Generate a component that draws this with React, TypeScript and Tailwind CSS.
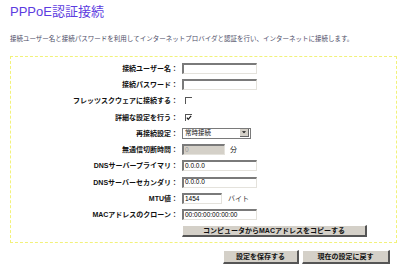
const font = "font-['Liberation_Sans','Noto_Sans_CJK_JP',sans-serif]";

function TextBox({ value = "", width = "w-[75px]", disabled = false }: { value?: string; width?: string; disabled?: boolean }) {
  return (
    <div
      className={`${width} h-[11px] border-t-2 border-l-2 border-t-[#7a7a7a] border-l-[#7a7a7a] border-b border-r border-b-[#e4e2dc] border-r-[#e4e2dc] flex items-center px-[1px] text-[6.5px] leading-none ${
        disabled ? "bg-[#d4d0c8] text-[#9a9a9a]" : "bg-white text-black"
      }`}
    >
      {value}
    </div>
  );
}

function Check({ checked = false }: { checked?: boolean }) {
  return (
    <div className="ml-[3px] w-[7px] h-[7px] border-t border-l border-[#555] bg-white relative">
      {checked && (
        <svg viewBox="0 0 7 7" className="absolute left-0 top-0 w-[6px] h-[6px]">
          <path d="M1 3 L2.6 5 L6 1" stroke="#111" strokeWidth="1.3" fill="none" />
        </svg>
      )}
    </div>
  );
}

function Button({ children, width }: { children: React.ReactNode; width: string }) {
  return (
    <div
      className={`${width} bg-[#d4d0c8] border-t border-l border-t-white border-l-white border-b-2 border-r-2 border-b-[#555] border-r-[#555] flex items-center justify-center text-[7px] text-[#111] font-bold leading-none`}
    >
      {children}
    </div>
  );
}

const rows: { label: string; field: React.ReactNode }[] = [
  { label: "接続ユーザー名", field: <TextBox /> },
  { label: "接続パスワード", field: <TextBox /> },
  { label: "フレッツスクウェアに接続する", field: <Check /> },
  { label: "詳細な設定を行う", field: <Check checked /> },
  {
    label: "再接続設定",
    field: (
      <div className="w-[69px] h-[11px] border border-[#7a7a7a] bg-white flex items-center justify-between pl-[2px] pr-[1px]">
        <span className="text-[6.5px] leading-none">常時接続</span>
        <div className="w-[9px] h-[8px] bg-[#d4d0c8] border-r border-b border-[#666] flex items-center justify-center">
          <svg viewBox="0 0 6 4" className="w-[4px] h-[3px]">
            <path d="M0 0 H6 L3 3 Z" fill="#111" />
          </svg>
        </div>
      </div>
    ),
  },
  {
    label: "無通信切断時間",
    field: (
      <div className="flex items-center gap-[5px]">
        <TextBox value="0" width="w-[43px]" disabled />
        <span className="text-[7px] leading-none">分</span>
      </div>
    ),
  },
  { label: "DNSサーバープライマリ", field: <TextBox value="0.0.0.0" /> },
  { label: "DNSサーバーセカンダリ", field: <TextBox value="0.0.0.0" /> },
  {
    label: "MTU値",
    field: (
      <div className="flex items-center gap-[6px]">
        <TextBox value="1454" width="w-[40px]" />
        <span className="text-[7px] leading-none text-[#333]">バイト</span>
      </div>
    ),
  },
  { label: "MACアドレスのクローン", field: <TextBox value="00:00:00:00:00:00" /> },
];

export default function App() {
  return (
    <div className={`w-[400px] h-[275px] bg-white ${font} text-[#111]`}>
      <div className="pl-[10px] pr-[3px] pt-[4px]">
        <h1 className="text-[13px] leading-[16px] text-[#5c3ce0] font-normal">PPPoE認証接続</h1>
        <p className="mt-[15px] text-[6.5px] leading-[8px] text-[#4c4c66]">
          接続ユーザー名と接続パスワードを利用してインターネットプロバイダと認証を行い、インターネットに接続します。
        </p>

        <div className="mt-[13px] h-[187px] border border-dashed border-[#f2f27a] pt-[3px]">
          {rows.map((r) => (
            <div key={r.label} className="grid grid-cols-[167px_1fr] gap-[4px] items-center h-[16.3px]">
              <div className="text-right text-[7px] font-bold leading-none text-[#111]">{r.label}：</div>
              <div className="flex items-center">{r.field}</div>
            </div>
          ))}
          <div className="grid grid-cols-[167px_1fr] gap-[4px] items-center h-[16px]">
            <div />
            <Button width="w-[185px] h-[12px]">コンピュータからMACアドレスをコピーする</Button>
          </div>
        </div>

        <div className="flex justify-end gap-[3px] pr-[7px] mt-[7px]">
          <Button width="w-[76px] h-[14px]">設定を保存する</Button>
          <Button width="w-[88px] h-[14px]">現在の設定に戻す</Button>
        </div>
      </div>
    </div>
  );
}
